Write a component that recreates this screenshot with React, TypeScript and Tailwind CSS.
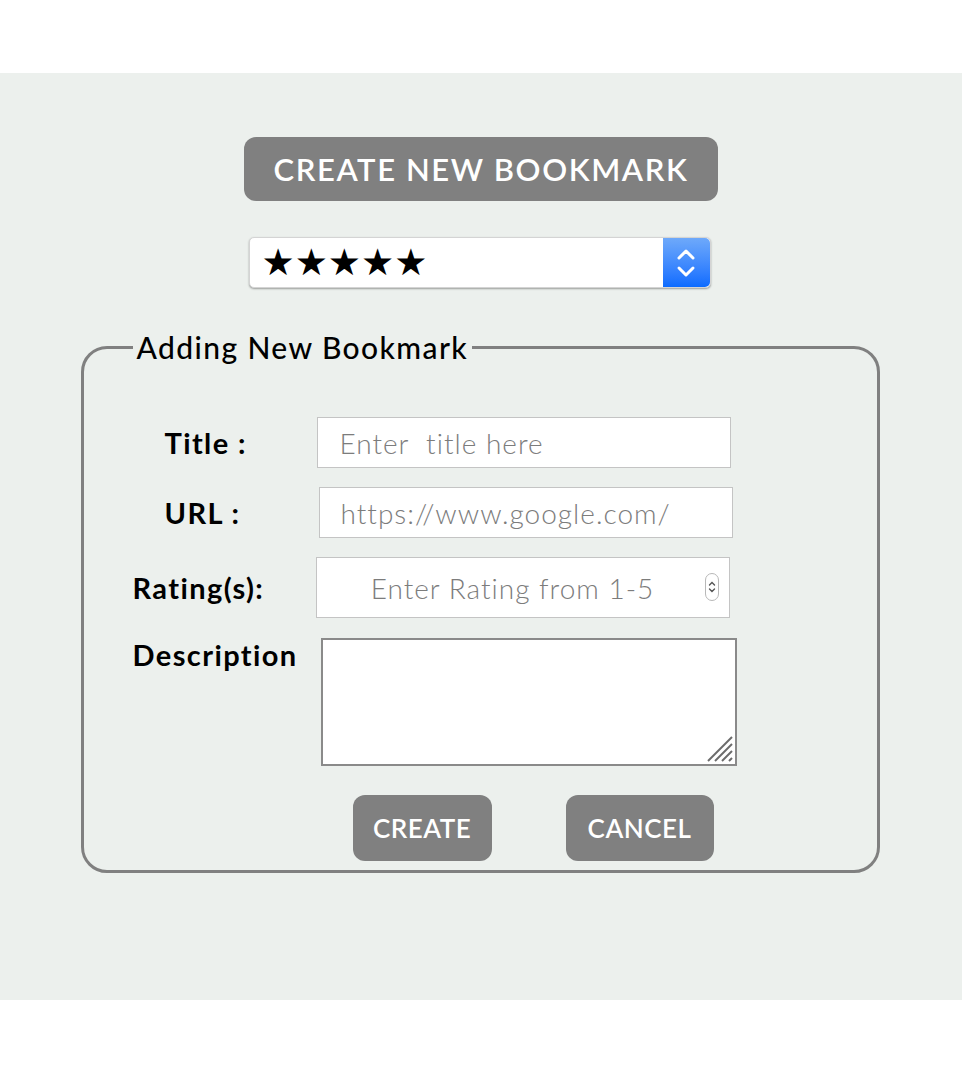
import { useState } from 'react';

const font = { fontFamily: '"Lato", "Noto Sans", sans-serif' };

function Stepper() {
  return (
    <div className="w-[47px] h-full rounded-r-[5px] bg-gradient-to-b from-[#6ea9fa] to-[#0a6bff] flex items-center justify-center">
      <svg width="22" height="34" viewBox="0 0 22 34" fill="none" stroke="white" strokeWidth="3" strokeLinecap="round" strokeLinejoin="round">
        <path d="M4 12 L11 5 L18 12" />
        <path d="M4 22 L11 29 L18 22" />
      </svg>
    </div>
  );
}

function App() {
  const [title, setTitle] = useState('');
  const [url, setUrl] = useState('');
  const [rating, setRating] = useState('');
  const [desc, setDesc] = useState('');

  return (
    <div className="h-[1068px] bg-white pt-[73px] overflow-hidden" style={font}>
      <div className="h-[927px] bg-[#ecf0ed] flex flex-col items-center pt-[64px]">
        {/* Top button */}
        <button className="h-[64px] w-[474px] rounded-[12px] bg-[#808080] text-white text-[31px] font-semibold tracking-[1.6px]">
          CREATE NEW BOOKMARK
        </button>

        {/* Star select */}
        <div className="mt-[36px] ml-[-3px] w-[462px] h-[51px] bg-white rounded-[5px] shadow-[0_1px_2px_rgba(0,0,0,0.35)] border border-[#d4d4d4] flex items-stretch">
          <div className="flex-1 flex items-center pl-[12px] text-[37px] text-black leading-none" style={{ fontFamily: '"DejaVu Sans", sans-serif' }}>
            ★★★★★
          </div>
          <Stepper />
        </div>

        {/* Form */}
        <fieldset className="mt-[42px] ml-[-2px] w-[799px] border-[3px] border-[#808080] rounded-[26px] pb-[9px]">
          <legend className="ml-[49px] px-[4px] text-[30px] font-medium text-black leading-[34px] tracking-[1.4px]">
            Adding New Bookmark
          </legend>

          <div className="mt-[53px] flex items-center">
            <label className="w-[233px] pl-[81px] text-[29px] font-bold text-black tracking-[1.4px]">Title :</label>
            <input
              value={title}
              onChange={(e) => setTitle(e.target.value)}
              placeholder="Enter  title here"
              className="w-[414px] h-[51px] bg-white border border-[#c4c4c4] px-[22px] text-[28px] font-light tracking-[1px] text-gray-700 placeholder:text-[#7c7c7c] outline-none"
            />
          </div>

          <div className="mt-[19px] flex items-center">
            <label className="w-[235px] pl-[81px] text-[29px] font-bold text-black tracking-[1.4px]">URL :</label>
            <input
              value={url}
              onChange={(e) => setUrl(e.target.value)}
              placeholder="https://www.google.com/"
              className="w-[414px] h-[51px] bg-white border border-[#c4c4c4] px-[21px] text-[28px] font-light tracking-[1px] text-gray-700 placeholder:text-[#7c7c7c] outline-none"
            />
          </div>

          <div className="mt-[19px] flex items-center">
            <label className="w-[232px] pl-[49px] text-[29px] font-bold text-black tracking-[1.4px]">Rating(s):</label>
            <div className="relative">
              <input
                value={rating}
                onChange={(e) => setRating(e.target.value)}
                placeholder="Enter Rating from 1-5"
                className="w-[414px] h-[61px] bg-white border border-[#c4c4c4] pl-[20px] pr-[40px] text-center text-[28px] font-light tracking-[1px] text-gray-700 placeholder:text-[#7c7c7c] outline-none"
              />
              <span className="absolute right-[11px] top-[16px] w-[14px] h-[28px] rounded-[7px] border border-[#b8b8b8] bg-white flex items-center justify-center">
                <svg width="8" height="18" viewBox="0 0 8 18" fill="none" stroke="#555" strokeWidth="1.4" strokeLinecap="round">
                  <path d="M1.5 7 L4 4.5 L6.5 7" />
                  <path d="M1.5 11 L4 13.5 L6.5 11" />
                </svg>
              </span>
            </div>
          </div>

          <div className="mt-[20px] flex items-start">
            <label className="w-[237px] pl-[49px] -mt-[5px] text-[29px] font-bold text-black tracking-[1.4px]">Description</label>
            <div className="relative">
              <textarea
                value={desc}
                onChange={(e) => setDesc(e.target.value)}
                className="block w-[416px] h-[128px] bg-white border-2 border-[#8a8a8a] resize-none outline-none p-2 text-[20px]"
              />
              <svg className="absolute right-[3px] bottom-[3px]" width="28" height="28" viewBox="0 0 28 28" stroke="#6b6b6b" strokeWidth="2">
                <path d="M2 26 L26 2" />
                <path d="M9 26 L26 9" />
                <path d="M16 26 L26 16" />
                <path d="M23 26 L26 23" />
              </svg>
            </div>
          </div>

          <div className="mt-[29px] flex">
            <button className="ml-[269px] w-[139px] h-[66px] rounded-[12px] bg-[#808080] text-white text-[26px] font-semibold tracking-[0.5px]">
              CREATE
            </button>
            <button className="ml-[74px] w-[148px] h-[66px] rounded-[12px] bg-[#808080] text-white text-[26px] font-semibold tracking-[0.5px]">
              CANCEL
            </button>
          </div>
        </fieldset>
      </div>
    </div>
  );
}

export default App;
